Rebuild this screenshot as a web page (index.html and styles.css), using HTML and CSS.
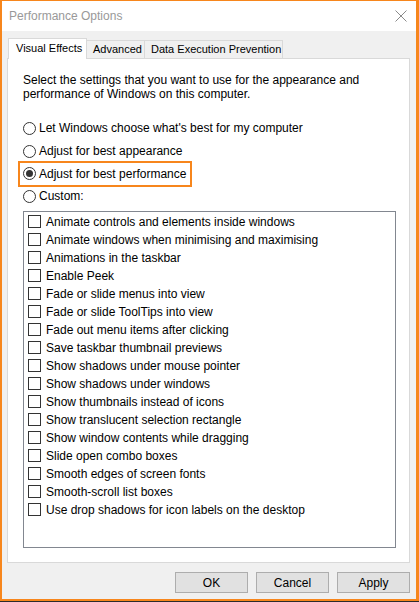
FILE: index.html
```html
<!DOCTYPE html>
<html lang="en">
<head>
    <meta charset="UTF-8">
    <title>Performance Options</title>
    <link rel="stylesheet" href="styles.css">
</head>
<body>
    <div class="window">
        <div class="titlebar">
            <span class="title">Performance Options</span>
            <svg class="close" width="12" height="12" viewBox="0 0 12 12">
                <path d="M0.5 0.5 L11.5 11.5 M11.5 0.5 L0.5 11.5" stroke="#8a8a8a" stroke-width="1" fill="none"/>
            </svg>
        </div>

        <div class="content">
            <!-- Tabs -->
            <div class="tabs">
                <div class="tab active">Visual Effects</div>
                <div class="tab tab-adv">Advanced</div>
                <div class="tab tab-dep">Data Execution Prevention</div>
            </div>

            <div class="panel">
                <p class="desc">Select the settings that you want to use for the appearance and performance of Windows on this computer.</p>

                <div class="radios">
                    <label class="radio-row"><span class="radio"></span>Let Windows choose what's best for my computer</label>
                    <label class="radio-row"><span class="radio"></span>Adjust for best appearance</label>
                    <label class="radio-row"><span class="highlight"><span class="radio checked"></span>Adjust for best performance</span></label>
                    <label class="radio-row"><span class="radio"></span>Custom:</label>
                </div>

                <div class="listbox">
                    <div class="check-row"><span class="check"></span>Animate controls and elements inside windows</div>
                    <div class="check-row"><span class="check"></span>Animate windows when minimising and maximising</div>
                    <div class="check-row"><span class="check"></span>Animations in the taskbar</div>
                    <div class="check-row"><span class="check"></span>Enable Peek</div>
                    <div class="check-row"><span class="check"></span>Fade or slide menus into view</div>
                    <div class="check-row"><span class="check"></span>Fade or slide ToolTips into view</div>
                    <div class="check-row"><span class="check"></span>Fade out menu items after clicking</div>
                    <div class="check-row"><span class="check"></span>Save taskbar thumbnail previews</div>
                    <div class="check-row"><span class="check"></span>Show shadows under mouse pointer</div>
                    <div class="check-row"><span class="check"></span>Show shadows under windows</div>
                    <div class="check-row"><span class="check"></span>Show thumbnails instead of icons</div>
                    <div class="check-row"><span class="check"></span>Show translucent selection rectangle</div>
                    <div class="check-row"><span class="check"></span>Show window contents while dragging</div>
                    <div class="check-row"><span class="check"></span>Slide open combo boxes</div>
                    <div class="check-row"><span class="check"></span>Smooth edges of screen fonts</div>
                    <div class="check-row"><span class="check"></span>Smooth-scroll list boxes</div>
                    <div class="check-row"><span class="check"></span>Use drop shadows for icon labels on the desktop</div>
                </div>
            </div>

            <!-- Dialog buttons -->
            <div class="buttons">
                <button class="btn">OK</button>
                <button class="btn">Cancel</button>
                <button class="btn">Apply</button>
            </div>
        </div>
    </div>
</body>
</html>
```

FILE: styles.css
```css
/* Global Styles */
body {
    margin: 0;
    padding: 0;
    background-color: #2b2b2b;
    font-family: 'Liberation Sans', Arial, sans-serif;
    font-size: 12px;
    color: #000;
}

.window {
    width: 414px;
    height: 598px;
    border-top: 1px solid #f7861c;
    border-left: 2px solid #f7861c;
    border-right: 3px solid #f7861c;
    border-bottom: 2px solid #f7861c;
    background-color: #f0f0f0;
    display: flex;
    flex-direction: column;
}

/* Title Bar */
.titlebar {
    height: 30px;
    background-color: #fff;
    display: flex;
    align-items: center;
    justify-content: space-between;
    padding: 0 9px 0 7px;
    flex-shrink: 0;
}

.title {
    color: #999;
    font-size: 12px;
}

.close {
    display: block;
}

.content {
    padding: 7px 6px 0 5px;
    display: flex;
    flex-direction: column;
}

/* Tabs */
.tabs {
    display: flex;
    align-items: flex-end;
    height: 20px;
    padding-left: 1px;
    position: relative;
    z-index: 1;
}

.tab {
    height: 18px;
    line-height: 17px;
    box-sizing: border-box;
    border: 1px solid #d9d9d9;
    border-bottom: none;
    background-color: #f0f0f0;
    padding-left: 6px;
    margin-left: -1px;
    white-space: nowrap;
    font-size: 11px;
}

.tab.active {
    height: 21px;
    line-height: 19px;
    background-color: #fff;
    width: 79px;
    padding-left: 7px;
    margin-left: 0;
    margin-bottom: -1px;
}

.tab-adv {
    width: 59px;
}

.tab-dep {
    width: 139px;
}

/* Panel */
.panel {
    background-color: #fff;
    border: 1px solid #d9d9d9;
    height: 503px;
    padding: 0 13px 0 15px;
}

.desc {
    margin: 14px 0 0 0;
    line-height: 14px;
    padding-right: 10px;
}

.radios {
    margin-top: 16px;
    display: flex;
    flex-direction: column;
}

.radio-row {
    height: 22.7px;
    display: flex;
    align-items: center;
}

.radio {
    width: 13px;
    height: 13px;
    box-sizing: border-box;
    border: 1px solid #333;
    border-radius: 50%;
    margin-right: 3px;
    display: flex;
    align-items: center;
    justify-content: center;
    flex-shrink: 0;
}

.radio.checked::after {
    content: "";
    width: 7px;
    height: 7px;
    border-radius: 50%;
    background-color: #333;
}

.highlight {
    display: flex;
    align-items: center;
    border: 2px solid #f7861c;
    padding: 4px 4px 4px 3px;
    margin: -6px 0 -6px -5px;
}

/* List of effects */
.listbox {
    margin-top: 3px;
    height: 334px;
    border: 1px solid #828790;
    padding: 1px 4px 0 4px;
}

.check-row {
    height: 18px;
    display: flex;
    align-items: center;
}

.check {
    width: 13px;
    height: 13px;
    box-sizing: border-box;
    border: 1px solid #333;
    margin-right: 5px;
    flex-shrink: 0;
}

/* Buttons */
.buttons {
    display: flex;
    justify-content: flex-end;
    gap: 8px;
    margin-top: 9px;
}

.btn {
    width: 73px;
    height: 21px;
    background-color: #e1e1e1;
    border: 1px solid #adadad;
    font-family: 'Liberation Sans', Arial, sans-serif;
    font-size: 12px;
    color: #000;
    padding: 0;
}
```
